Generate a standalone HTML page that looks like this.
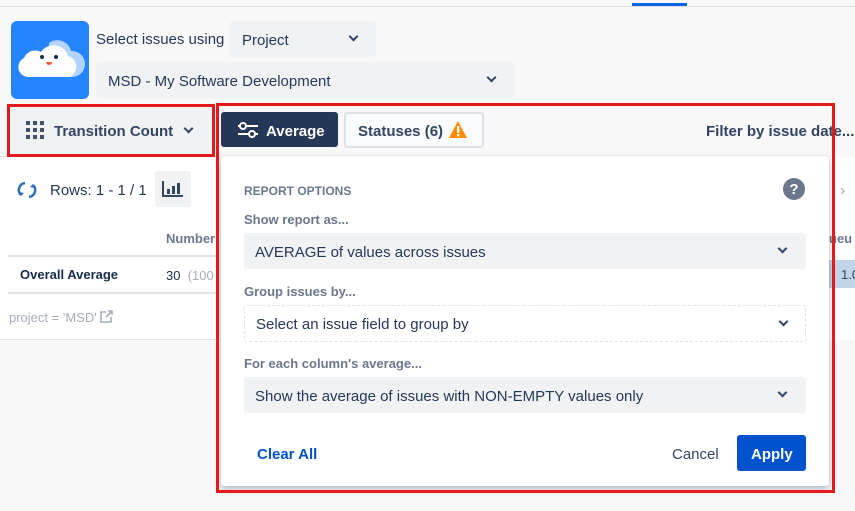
<!DOCTYPE html>
<html><head><meta charset="utf-8"><style>
*{box-sizing:border-box;margin:0;padding:0}
body{width:855px;height:511px;overflow:hidden;background:#f8f8f9;font-family:"Liberation Sans",sans-serif;position:relative;color:#172b4d}
.a{position:absolute}
.sel{background:#f1f2f4;border-radius:3px}
.chev{position:absolute;width:7px;height:7px;border-right:2px solid #344563;border-bottom:2px solid #344563;transform:rotate(45deg)}
.lbl{color:#6b778c;font-size:13px;font-weight:bold}
</style></head><body>
<div class="a" style="left:0;top:6px;width:855px;height:1px;background:#dfe1e6"></div>
<div class="a" style="left:632px;top:3px;width:55px;height:3px;background:#0c66e4"></div>
<!-- logo -->
<div class="a" style="left:11px;top:21px;width:78px;height:78px;background:#2684ff;border-radius:6px">
<svg width="78" height="78" viewBox="0 0 78 78"><path d="M38 22a14 14 0 0 1 22 8a12 12 0 0 1 2 26H40z" fill="#b3d4ff"/><path d="M17 56a10 10 0 0 1-4-19a12 12 0 0 1 17-6a15 15 0 0 1 27 4a11 11 0 0 1 1 21z" fill="#fff"/><circle cx="31" cy="36" r="2" fill="#172b4d"/><circle cx="45" cy="36" r="2" fill="#172b4d"/><path d="M35 41h6a3 3 0 0 1-6 0z" fill="#ff5630"/></svg></div>
<div class="a" style="left:96px;top:31px;font-size:15px;color:#253858">Select issues using</div>
<div class="a sel" style="left:230px;top:21px;width:146px;height:36px"><span class="a" style="left:12px;top:11px;font-size:15px;color:#253858">Project</span><span class="chev" style="left:120px;top:12px"></span></div>
<div class="a sel" style="left:96px;top:62px;width:418px;height:36px"><span class="a" style="left:12px;top:11px;font-size:15px;color:#253858">MSD - My Software Development</span><span class="chev" style="left:392px;top:12px"></span></div>
<!-- left area -->
<div class="a" style="left:0;top:157px;width:216px;height:183px;background:#fff"></div>
<div class="a" style="left:0;top:339px;width:855px;height:1px;background:#e4e5e8"></div>
<div class="a" style="left:0;top:156px;width:216px;height:1px;background:#e4e5e8"></div>
<div class="a" style="left:10px;top:107px;width:202px;height:46px;background:#f1f2f4"></div>
<div class="a" style="left:26px;top:121px;width:19px;height:19px">
<svg width="19" height="19"><g fill="#42526e"><rect x="0" y="0" width="4" height="4"/><rect x="7" y="0" width="4" height="4"/><rect x="14" y="0" width="4" height="4"/><rect x="0" y="7" width="4" height="4"/><rect x="7" y="7" width="4" height="4"/><rect x="14" y="7" width="4" height="4"/><rect x="0" y="14" width="4" height="4"/><rect x="7" y="14" width="4" height="4"/><rect x="14" y="14" width="4" height="4"/></g></svg></div>
<div class="a" style="left:54px;top:123px;font-size:15px;font-weight:bold;color:#344563">Transition Count</div>
<span class="chev" style="left:185px;top:125px"></span>
<div class="a" style="left:7px;top:104px;width:208px;height:53px;border:3px solid #e3191c"></div>
<svg class="a" style="left:16px;top:179px" width="22" height="22" viewBox="0 0 22 22"><path d="M9 4a7 7 0 0 0-4 12M13 18a7 7 0 0 0 4-12" fill="none" stroke="#2d6fb6" stroke-width="2.5"/><path d="M3 13l2 4 3-3zM19 9l-2-4-3 3z" fill="#2d6fb6"/></svg>
<div class="a" style="left:50px;top:182px;font-size:15px;color:#253858">Rows: 1 - 1 / 1</div>
<div class="a" style="left:155px;top:171px;width:36px;height:36px;background:#f1f2f4;border-radius:3px"><svg class="a" style="left:7px;top:9px" width="22" height="18"><path d="M1 1v15h20" fill="none" stroke="#344563" stroke-width="2"/><rect x="5" y="9" width="3" height="5" fill="#344563"/><rect x="10" y="6" width="3" height="8" fill="#344563"/><rect x="15" y="3" width="3" height="11" fill="#344563"/></svg></div>
<div class="a" style="left:166px;top:231px;font-size:13px;font-weight:bold;color:#6b778c">Number</div>
<div class="a" style="left:8px;top:255px;width:208px;height:2px;background:#e4e5e8"></div>
<div class="a" style="left:20px;top:267px;font-size:13px;font-weight:bold;color:#172b4d">Overall Average</div>
<div class="a" style="left:166px;top:268px;font-size:13px;color:#172b4d">30 <span style="color:#a5adba">&nbsp;(100</span></div>
<div class="a" style="left:8px;top:292px;width:208px;height:2px;background:#e4e5e8"></div>
<div class="a" style="left:9px;top:310px;font-size:13px;color:#a5adba">project = 'MSD' <svg width="13" height="13" style="vertical-align:-1px"><path d="M6 2H1v10h10V7M8 1h4v4M12 1L6 7" fill="none" stroke="#a5adba" stroke-width="1.6"/></svg></div>
<!-- right small table bits -->
<div class="a" style="left:829px;top:157px;width:26px;height:183px;background:#fff"></div>
<div class="a" style="left:840px;top:182px;font-size:16px;color:#a5adba">›</div>
<div class="a" style="left:829px;top:231px;font-size:13px;font-weight:bold;color:#6b778c">ueu</div>
<div class="a" style="left:829px;top:260px;width:26px;height:28px;background:#c1d5e9"><span class="a" style="left:12px;top:7px;font-size:13px;color:#344563">1.0</span></div>
<!-- top bar right -->
<div class="a" style="left:219px;top:106px;width:636px;height:50px;background:#f8f8f9"></div>
<div class="a" style="left:221px;top:112px;width:117px;height:35px;background:#253858;border-radius:3px">
<svg class="a" style="left:16px;top:9px" width="22" height="18"><path d="M1 5h20M1 13h20" stroke="#fff" stroke-width="2"/><circle cx="6" cy="5" r="3" fill="#253858" stroke="#fff" stroke-width="2"/><circle cx="15" cy="13" r="3" fill="#253858" stroke="#fff" stroke-width="2"/></svg>
<span class="a" style="left:45px;top:11px;font-size:15px;font-weight:bold;color:#fff">Average</span></div>
<div class="a" style="left:344px;top:112px;width:140px;height:36px;border:2px solid #dfe1e6;border-radius:3px;background:#fafbfc">
<span class="a" style="left:12px;top:9px;font-size:15px;font-weight:bold;color:#344563">Statuses (6)</span>
<svg class="a" style="left:102px;top:6px" width="20" height="19"><path d="M10 1L19 18H1z" fill="#ff8b00"/><rect x="9" y="6" width="2.4" height="7" fill="#fff"/><rect x="9" y="14" width="2.4" height="2.4" fill="#fff"/></svg></div>
<div class="a" style="left:706px;top:123px;font-size:15px;font-weight:bold;color:#344563">Filter by issue date...</div>
<!-- popup -->
<div class="a" style="left:221px;top:156px;width:608px;height:330px;background:#fff;border-radius:3px;box-shadow:0 4px 8px rgba(9,30,66,.25),0 0 1px rgba(9,30,66,.31)"></div>
<div class="a lbl" style="left:244px;top:184px;font-size:12px">REPORT OPTIONS</div>
<svg class="a" style="left:782px;top:177px" width="24" height="24"><circle cx="12" cy="12" r="11" fill="#6b778c"/><text x="12" y="17" text-anchor="middle" font-family="Liberation Sans" font-weight="bold" font-size="15" fill="#fff">?</text></svg>
<div class="a lbl" style="left:244px;top:212px">Show report as...</div>
<div class="a sel" style="left:244px;top:233px;width:562px;height:36px"><span class="a" style="left:11px;top:11px;font-size:15px;color:#253858">AVERAGE of values across issues</span><span class="chev" style="left:535px;top:12px"></span></div>
<div class="a lbl" style="left:244px;top:284px">Group issues by...</div>
<div class="a" style="left:244px;top:305px;width:562px;height:37px;border:1px dashed #dfe1e6;border-radius:3px"><span class="a" style="left:11px;top:10px;font-size:15px;color:#253858">Select an issue field to group by</span><span class="chev" style="left:535px;top:12px"></span></div>
<div class="a lbl" style="left:244px;top:356px">For each column's average...</div>
<div class="a sel" style="left:244px;top:377px;width:562px;height:36px"><span class="a" style="left:11px;top:11px;font-size:15px;color:#253858">Show the average of issues with NON-EMPTY values only</span><span class="chev" style="left:535px;top:12px"></span></div>
<div class="a" style="left:257px;top:446px;font-size:15px;font-weight:bold;color:#0052cc">Clear All</div>
<div class="a" style="left:672px;top:446px;font-size:15px;color:#344563">Cancel</div>
<div class="a" style="left:737px;top:435px;width:69px;height:36px;background:#0052cc;border-radius:3px"><span class="a" style="left:14px;top:11px;font-size:15px;font-weight:bold;color:#fff">Apply</span></div>
<div class="a" style="left:216px;top:103px;width:619px;height:390px;border:3px solid #e3191c"></div>
</body></html>
